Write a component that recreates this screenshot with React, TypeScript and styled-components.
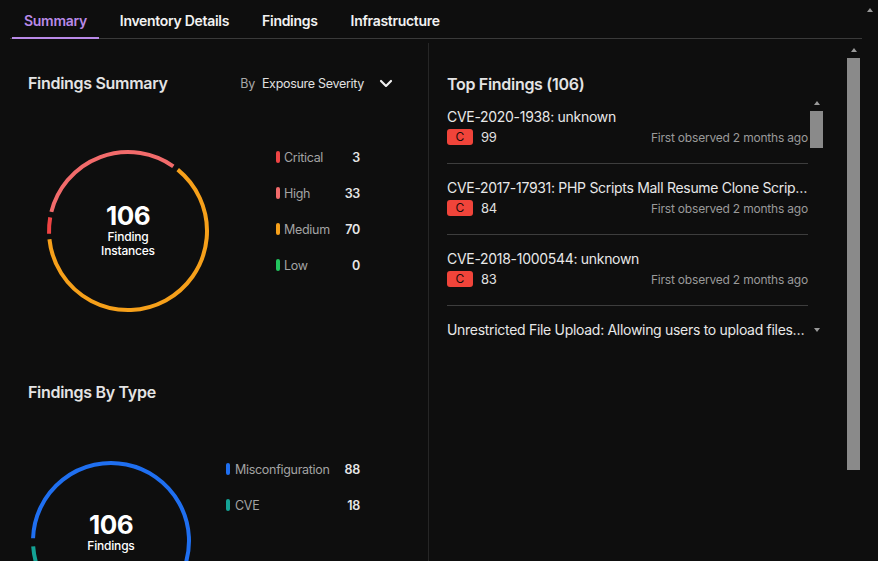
import styled, { createGlobalStyle } from "styled-components";

const GlobalStyle = createGlobalStyle`
    html, body {
        margin: 0;
        background: #0e0e0e;
        font-family: "Inter", "Noto Sans", sans-serif;
        letter-spacing: -0.3px;
        color: #e6e6e6;
        overflow: hidden;
    }
    * {
        box-sizing: border-box;
    }
`;

const Page = styled.div`
    display: flex;
    width: 878px;
    height: 561px;
`;
const Content = styled.div`
    flex: 1;
    display: flex;
    flex-direction: column;
`;
const PageEdge = styled.div`
    width: 16px;
    display: flex;
    justify-content: center;
    padding-top: 8px;
`;
const TabBar = styled.nav`
    display: flex;
    gap: 9px;
    margin-left: 10px;
    padding-left: 2px;
    border-bottom: 1px solid #3a3a3a;
`;
const Tab = styled.div<{ $active?: boolean }>`
    padding: 12px 12px 7px;
    font-size: 14px;
    line-height: 18px;
    font-weight: 600;
    color: ${(p) => (p.$active ? "#b98ae8" : "#f2f2f2")};
    border-bottom: 2px solid ${(p) => (p.$active ? "#b98ae8" : "transparent")};
    margin-bottom: -1px;
`;
const Body = styled.div`
    flex: 1;
    display: flex;
    min-height: 0;
`;
const LeftPanel = styled.section`
    width: 428px;
    padding: 33px 32px 0 28px;
    display: flex;
    flex-direction: column;
`;
const Divider = styled.div`
    width: 1px;
    background: #262626;
    margin-top: 4px;
`;
const RightPanel = styled.section`
    flex: 1;
    padding: 34px 0 0 18px;
`;
const HeaderRow = styled.div`
    display: flex;
    align-items: center;
    justify-content: space-between;
    height: 22px;
`;
const SectionTitle = styled.h2<{ $top?: number }>`
    margin: ${(p) => p.$top ?? 0}px 0 0;
    font-size: 16px;
    line-height: 22px;
    font-weight: 600;
    color: #e4e4e4;
`;
const Selector = styled.div`
    display: flex;
    align-items: center;
    font-size: 12.5px;
    color: #e0e0e0;
`;
const SelectorLabel = styled.span`
    color: #a8a8a8;
    margin-right: 7px;
`;
const Chevron = styled.svg`
    margin-left: 12px;
`;
const ChartRow = styled.div<{ $top: number; $shift: number }>`
    display: flex;
    align-items: flex-start;
    margin-top: ${(p) => p.$top}px;
    margin-left: ${(p) => p.$shift}px;
`;
const DonutWrap = styled.div`
    position: relative;
    width: 170px;
    height: 170px;
    flex-shrink: 0;
`;
const DonutCenter = styled.div<{ $lift: number }>`
    position: absolute;
    inset: 0;
    display: flex;
    flex-direction: column;
    align-items: center;
    justify-content: center;
    padding-bottom: ${(p) => p.$lift}px;
    color: #fff;
    text-align: center;
    letter-spacing: -0.2px;
`;
const BigNumber = styled.div`
    font-size: 26px;
    line-height: 28px;
    font-weight: 700;
    letter-spacing: -0.5px;
`;
const CenterLabel = styled.div`
    font-size: 12px;
    line-height: 14px;
    font-weight: 500;
`;
const Legend = styled.div<{ $left: number; $top: number; $width: number }>`
    display: flex;
    flex-direction: column;
    gap: 18px;
    margin-left: ${(p) => p.$left}px;
    margin-top: ${(p) => p.$top}px;
    width: ${(p) => p.$width}px;
`;
const LegendRow = styled.div<{ $gap: number }>`
    display: flex;
    align-items: center;
    height: 18px;
    gap: ${(p) => p.$gap}px;
`;
const Swatch = styled.span<{ $color: string }>`
    width: 4px;
    height: 12px;
    border-radius: 2px;
    background: ${(p) => p.$color};
    flex-shrink: 0;
`;
const LegendLabel = styled.span`
    flex: 1;
    font-size: 12.5px;
    color: #a3a3a3;
`;
const LegendValue = styled.span`
    font-size: 12.5px;
    font-weight: 600;
    color: #e6e6e6;
`;
const ListWrap = styled.div`
    display: flex;
    margin-top: 3px;
    height: 242px;
    overflow: hidden;
`;
const Items = styled.div`
    width: 361px;
    display: flex;
    flex-direction: column;
    gap: 14px;
    padding-top: 9px;
`;
const Item = styled.div`
    padding-bottom: 17px;
    border-bottom: 1px solid #3d3d3d;
`;
const ItemTitle = styled.div`
    font-size: 14px;
    line-height: 20px;
    color: #e8e8e8;
    white-space: nowrap;
    overflow: hidden;
    text-overflow: ellipsis;
`;
const Meta = styled.div`
    display: flex;
    align-items: center;
    height: 18px;
    margin-top: 1px;
`;
const Badge = styled.span`
    width: 26px;
    height: 16px;
    border-radius: 3px;
    background: #f0443a;
    color: #1a0a0a;
    font-size: 12px;
    line-height: 16px;
    text-align: center;
    letter-spacing: 0;
`;
const Score = styled.span`
    margin-left: 8px;
    font-size: 13px;
    color: #e0e0e0;
`;
const Observed = styled.span`
    margin-left: auto;
    font-size: 12px;
    letter-spacing: -0.2px;
    color: #9a9a9a;
`;
const ScrollCol = styled.div<{ $gapLeft: number }>`
    width: 13px;
    margin-left: ${(p) => p.$gapLeft}px;
    display: flex;
    flex-direction: column;
    align-items: center;
`;
const Arrow = styled.span<{ $down?: boolean; $top: number; $bottom: number }>`
    width: 0;
    height: 0;
    border-left: 3.5px solid transparent;
    border-right: 3.5px solid transparent;
    ${(p) =>
        p.$down
            ? "border-top: 4px solid #9a9a9a;"
            : "border-bottom: 4px solid #9a9a9a;"}
    margin: ${(p) => p.$top}px 0 ${(p) => p.$bottom}px;
`;
const Thumb = styled.div<{ $height: number }>`
    width: 13px;
    height: ${(p) => p.$height}px;
    background: #8a8a8a;
`;
const Spacer = styled.div`
    flex: 1;
`;
const PageScroll = styled.div`
    width: 13px;
    margin: 9px 2px 0 1px;
    display: flex;
    flex-direction: column;
    align-items: center;
`;

type Segment = { from: number; to: number; color: string };

function polar(c: number, r: number, deg: number) {
    const a = ((deg - 90) * Math.PI) / 180;
    return [c + r * Math.cos(a), c + r * Math.sin(a)];
}

function arcPath(c: number, r: number, from: number, to: number) {
    const [x1, y1] = polar(c, r, from);
    const [x2, y2] = polar(c, r, to);
    const large = to - from > 180 ? 1 : 0;
    return `M ${x1} ${y1} A ${r} ${r} 0 ${large} 1 ${x2} ${y2}`;
}

function Donut({ r, segments, value, label, lift = 0 }: { r: number; segments: Segment[]; value: string; label: string[]; lift?: number }) {
    return (
        <DonutWrap>
            <svg width="170" height="170" viewBox="0 0 170 170">
                {segments.map((s, i) => (
                    <path key={i} d={arcPath(85, r, s.from, s.to)} fill="none" stroke={s.color} strokeWidth="4" />
                ))}
            </svg>
            <DonutCenter $lift={lift}>
                <BigNumber>{value}</BigNumber>
                {label.map((l) => (
                    <CenterLabel key={l}>{l}</CenterLabel>
                ))}
            </DonutCenter>
        </DonutWrap>
    );
}

const severity = [
    { name: "Critical", value: 3, color: "#ef4444" },
    { name: "High", value: 33, color: "#f26b6b" },
    { name: "Medium", value: 70, color: "#f6a01a" },
    { name: "Low", value: 0, color: "#22c55e" },
];
const types = [
    { name: "Misconfiguration", value: 88, color: "#1f6ff0" },
    { name: "CVE", value: 18, color: "#14a395" },
];
const findings = [
    { title: "CVE-2020-1938: unknown", score: 99 },
    { title: "CVE-2017-17931: PHP Scripts Mall Resume Clone Script 2.0.9 has SQL injection", score: 84 },
    { title: "CVE-2018-1000544: unknown", score: 83 },
    { title: "Unrestricted File Upload: Allowing users to upload files without validation", score: 80 },
];

export default function App() {
    return (
        <>
            <GlobalStyle />
            <Page>
                <Content>
                    <TabBar>
                        <Tab $active>Summary</Tab>
                        <Tab>Inventory Details</Tab>
                        <Tab>Findings</Tab>
                        <Tab>Infrastructure</Tab>
                    </TabBar>
                    <Body>
                        <LeftPanel>
                            <HeaderRow>
                                <SectionTitle>Findings Summary</SectionTitle>
                                <Selector>
                                    <SelectorLabel>By</SelectorLabel>
                                    <span>Exposure Severity</span>
                                    <Chevron width="20" height="20" viewBox="0 0 24 24" fill="none" stroke="#f0f0f0" strokeWidth="2.6" strokeLinecap="round" strokeLinejoin="round">
                                        <path d="M6 9.5l6 6 6-6" />
                                    </Chevron>
                                </Selector>
                            </HeaderRow>
                            <ChartRow $top={52} $shift={15}>
                                <Donut
                                    r={79}
                                    value="106"
                                    label={["Finding", "Instances"]}
                                    lift={3}
                                    segments={[
                                        { from: 268, to: 280, color: "#ef4444" },
                                        { from: 284, to: 395, color: "#f26b6b" },
                                        { from: 39, to: 264, color: "#f6a01a" },
                                    ]}
                                />
                                <Legend $left={63} $top={2} $width={84}>
                                    {severity.map((s) => (
                                        <LegendRow key={s.name} $gap={4}>
                                            <Swatch $color={s.color} />
                                            <LegendLabel>{s.name}</LegendLabel>
                                            <LegendValue>{s.value}</LegendValue>
                                        </LegendRow>
                                    ))}
                                </Legend>
                            </ChartRow>
                            <SectionTitle $top={65}>Findings By Type</SectionTitle>
                            <ChartRow $top={53} $shift={-2}>
                                <Donut
                                    r={78}
                                    value="106"
                                    label={["Findings"]}
                                    lift={18}
                                    segments={[
                                        { from: 272, to: 570, color: "#1f6ff0" },
                                        { from: 213, to: 266, color: "#14a395" },
                                    ]}
                                />
                                <Legend $left={30} $top={4} $width={134}>
                                    {types.map((s) => (
                                        <LegendRow key={s.name} $gap={5}>
                                            <Swatch $color={s.color} />
                                            <LegendLabel>{s.name}</LegendLabel>
                                            <LegendValue>{s.value}</LegendValue>
                                        </LegendRow>
                                    ))}
                                </Legend>
                            </ChartRow>
                        </LeftPanel>
                        <Divider />
                        <RightPanel>
                            <SectionTitle>Top Findings (106)</SectionTitle>
                            <ListWrap>
                                <Items>
                                    {findings.map((f) => (
                                        <Item key={f.title}>
                                            <ItemTitle>{f.title}</ItemTitle>
                                            <Meta>
                                                <Badge>C</Badge>
                                                <Score>{f.score}</Score>
                                                <Observed>First observed 2 months ago</Observed>
                                            </Meta>
                                        </Item>
                                    ))}
                                </Items>
                                <ScrollCol $gapLeft={2}>
                                    <Arrow $top={3} $bottom={6} />
                                    <Thumb $height={37} />
                                    <Spacer />
                                    <Arrow $down $top={0} $bottom={8} />
                                </ScrollCol>
                            </ListWrap>
                        </RightPanel>
                        <PageScroll>
                            <Arrow $top={0} $bottom={6} />
                            <Thumb $height={412} />
                        </PageScroll>
                    </Body>
                </Content>
                <PageEdge>
                    <Arrow $top={0} $bottom={0} />
                </PageEdge>
            </Page>
        </>
    );
}
